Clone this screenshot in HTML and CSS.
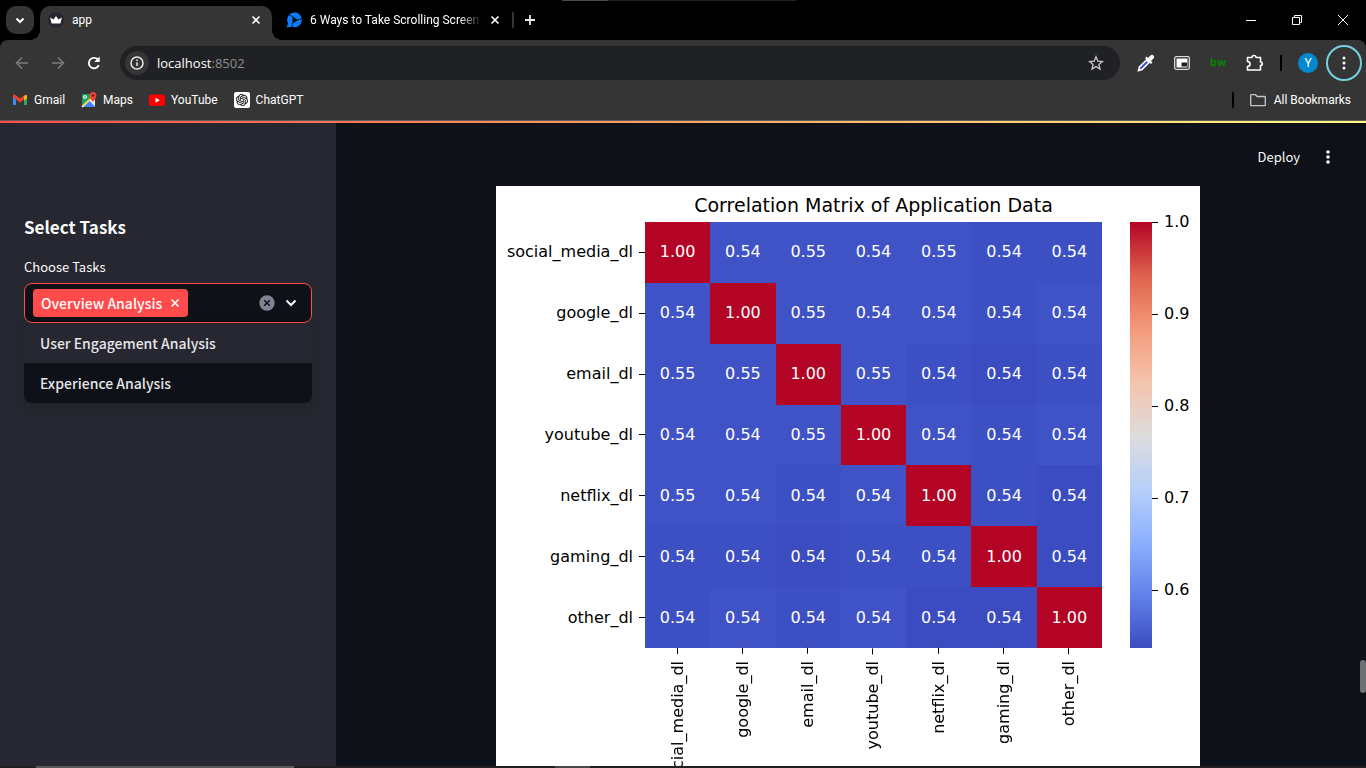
FILE: index.html
```html
<!DOCTYPE html>
<html lang="en">
<head>
<meta charset="utf-8">
<title>app</title>
<link rel="stylesheet" href="styles.css">
</head>
<body>
<div class="browser">
  <div class="tabstrip">
    <button class="tab-search" aria-label="Search tabs"><svg width="12" height="12" viewBox="0 0 12 12"><path d="M2.500 4.500 6 8l3.500-3.500" fill="none" stroke="#fff" stroke-width="2"/></svg></button>
    <div class="tab tab-active">
      <svg width="16" height="16" viewBox="0 0 16 16"><circle cx="8" cy="8" r="8" fill="#262730"/><path d="M2 5.500 5.500 7.500 8 4l2.500 3.500L14 5.500 12.300 11.500H3.700z" fill="#fff"/></svg>
      <span class="tab-title">app</span>
      <button class="tab-close" aria-label="Close tab"><svg width="10" height="10" viewBox="0 0 10 10"><path d="M1.500 1.500l7 7M8.500 1.500l-7 7" stroke="#fff" stroke-width="1.600"/></svg></button>
    </div>
    <div class="tab tab-second">
      <svg width="16" height="16" viewBox="0 0 16 16"><path d="M8.500.500a7.300 7.300 0 1 1-2 14.300L.500 15.500 2 11.500A7.500 7.500 0 0 1 8.500.500z" fill="#0a7cff"/><path d="M6.500 4.500 12.500 8 6.500 11.500z" fill="#06101c"/><path d="M3.500 3 8 5.500M12 8l4-1.500M6.800 11l-1 4" stroke="#06101c" stroke-width=".900"/></svg>
      <span class="tab-title tab-title-fade">6 Ways to Take Scrolling Screen</span>
      <button class="tab-close" aria-label="Close tab"><svg width="10" height="10" viewBox="0 0 10 10"><path d="M1.500 1.500l7 7M8.500 1.500l-7 7" stroke="#fff" stroke-width="1.600"/></svg></button>
    </div>
    <span class="tab-divider"></span>
    <button class="tab-new" aria-label="New tab"><svg width="12" height="12" viewBox="0 0 12 12"><path d="M6 1v10M1 6h10" stroke="#e8e8e8" stroke-width="1.800"/></svg></button>
    <div class="window-buttons">
      <button aria-label="Minimize"><svg width="10" height="10" viewBox="0 0 10 10"><path d="M0 5.500h10" stroke="#fff"/></svg></button>
      <button aria-label="Restore"><svg width="10" height="10" viewBox="0 0 10 10"><path d="M.500 2.500h7v7h-7zM2.500 2.500v-2h7v7h-2" fill="none" stroke="#fff"/></svg></button>
      <button aria-label="Close"><svg width="10" height="10" viewBox="0 0 10 10"><path d="M0 0l10 10M10 0 0 10" stroke="#fff"/></svg></button>
    </div>
  </div>

  <div class="chrome">
    <div class="toolbar">
      <button class="tool" aria-label="Back"><svg width="16" height="16" viewBox="0 0 16 16"><path d="M14 8H3M8 2.500 2.500 8 8 13.500" fill="none" stroke="#7c7c7c" stroke-width="1.600"/></svg></button>
      <button class="tool" aria-label="Forward"><svg width="16" height="16" viewBox="0 0 16 16"><path d="M2 8h11M8 2.500 13.500 8 8 13.500" fill="none" stroke="#7c7c7c" stroke-width="1.600"/></svg></button>
      <button class="tool" aria-label="Reload"><svg width="16" height="16" viewBox="0 0 16 16"><path d="M12.800 10.200A5.200 5.200 0 1 1 12 4.700" fill="none" stroke="#fff" stroke-width="1.900"/><path d="M13.700 1.500V7H8.200z" fill="#fff"/></svg></button>
      <div class="omnibox">
        <button class="site-info" aria-label="Site information"><svg width="14" height="14" viewBox="0 0 14 14"><circle cx="7" cy="7" r="6" fill="none" stroke="#e8e8e8" stroke-width="1.500"/><path d="M7 6.200V10M7 3.500v1.600" stroke="#e8e8e8" stroke-width="1.500"/></svg></button>
        <div class="url">localhost<span class="port">:8502</span></div>
        <button class="star" aria-label="Bookmark this tab"><svg width="16" height="16" viewBox="0 0 16 16"><path d="M8 1.800l1.800 4.300 4.600.400-3.500 3 1.100 4.600L8 11.600l-4 2.500 1.100-4.600-3.500-3 4.600-.400z" fill="none" stroke="#c7c7c7" stroke-width="1.300"/></svg></button>
      </div>
      <div class="extensions">
        <button class="tool" aria-label="Color picker"><svg width="18" height="18" viewBox="0 0 18 18"><path d="M9.500 6 2.500 13 1.500 16.500 5 15.500 12 8.500z" fill="#3554d8" stroke="#fff" stroke-width="1.600"/><path d="M8 4l6 6 1.500-1.500-1.500-1.500 2.500-2.500a2 2 0 0 0-3-3L11 4 9.500 2.500z" fill="#fff"/></svg></button>
        <button class="tool" aria-label="Picture in picture"><svg width="16" height="14" viewBox="0 0 16 14"><rect x=".700" y=".700" width="14.600" height="12.600" rx="1.500" fill="#222" stroke="#ddd" stroke-width="1.300"/><path d="M2.500 2.500h11v9h-11z" fill="#fff"/><path d="M7.500 6.500h5.500v4H7.500z" fill="#222"/></svg></button>
        <button class="tool bw" aria-label="bw">bw</button>
        <button class="tool" aria-label="Extensions"><svg width="18" height="18" viewBox="0 0 18 18"><path d="M2.500 3.500H7a2 2 0 0 1 4 0h4.500V8a1.500 1.500 0 0 1 0 3.500V16h-13v-3.500a2.500 2.500 0 0 0 0-5z" fill="none" stroke="#fff" stroke-width="1.600" stroke-linejoin="round"/></svg></button>
        <span class="tool-divider"></span>
        <button class="tool" aria-label="Profile Y"><span class="avatar">Y</span></button>
        <button class="tool menu" aria-label="Browser menu"><svg width="4" height="16" viewBox="0 0 4 16"><g fill="#fff"><circle cx="2" cy="3" r="1.500"/><circle cx="2" cy="8" r="1.500"/><circle cx="2" cy="13" r="1.500"/></g></svg></button>
      </div>
    </div>

    <div class="bookmarks">
      <a href="#"><svg width="16" height="16" viewBox="0 0 16 16"><path d="M1 4v9h3V8z" fill="#4285f4"/><path d="M15 4v9h-3V8z" fill="#34a853"/><path d="M1 4.500V3.500C1 2.500 2.500 2 3.500 3L8 6.500 12.500 3C13.500 2 15 2.500 15 3.500V5L8 10.500 1 5z" fill="#ea4335"/><path d="M12 4l3-1v3.200l-3 2.300z" fill="#fbbc04"/></svg>Gmail</a>
      <a href="#"><svg width="16" height="16" viewBox="0 0 16 16"><path d="M1 2h13v13H1z" fill="#e8eaed"/><path d="M1 2h9v4L1 14z" fill="#1ea362"/><path d="M8 8.500 14.500 15H2z" fill="#4285f4"/><path d="M9 7.500 1 15" stroke="#fff" stroke-width="1.500"/><path d="M10.500 5.500 1 14" stroke="#fbbc04" stroke-width="1.200"/><circle cx="4" cy="5" r="1.400" fill="none" stroke="#fff"/><path d="M12 0a3.500 3.500 0 0 1 3.500 3.500C15.500 6 12 10 12 10S8.500 6 8.500 3.500A3.500 3.500 0 0 1 12 0z" fill="#ea4335"/><circle cx="12" cy="3.500" r="1.200" fill="#811411"/></svg>Maps</a>
      <a href="#"><svg width="16" height="16" viewBox="0 0 16 16"><rect y="2.500" width="16" height="11.500" rx="2.500" fill="#f00"/><path d="M6.500 5.700v5l4.300-2.500z" fill="#fff"/></svg>YouTube</a>
      <a href="#"><svg width="16" height="16" viewBox="0 0 16 16"><rect width="16" height="16" rx="2" fill="#fff"/><path transform="translate(2 2) scale(.5)" fill="#111" stroke="#111" stroke-width=".3" d="M22.2819 9.8211a5.9847 5.9847 0 0 0-.5157-4.9108 6.0462 6.0462 0 0 0-6.5098-2.9A6.0651 6.0651 0 0 0 4.9807 4.1818a5.9847 5.9847 0 0 0-3.9977 2.9 6.0462 6.0462 0 0 0 .7427 7.0966 5.98 5.98 0 0 0 .511 4.9107 6.051 6.051 0 0 0 6.5146 2.9001A5.9847 5.9847 0 0 0 13.2599 24a6.0557 6.0557 0 0 0 5.7718-4.2058 5.9894 5.9894 0 0 0 3.9977-2.9001 6.0557 6.0557 0 0 0-.7475-7.0729zm-9.022 12.6081a4.4755 4.4755 0 0 1-2.8764-1.0408l.1419-.0804 4.7783-2.7582a.7948.7948 0 0 0 .3927-.6813v-6.7369l2.02 1.1686a.071.071 0 0 1 .038.052v5.5826a4.504 4.504 0 0 1-4.4945 4.4944zm-9.6607-4.1254a4.4708 4.4708 0 0 1-.5346-3.0137l.142.0852 4.783 2.7582a.7712.7712 0 0 0 .7806 0l5.8428-3.3685v2.3324a.0804.0804 0 0 1-.0332.0615L9.74 19.9502a4.4992 4.4992 0 0 1-6.1408-1.6464zM2.3408 7.8956a4.485 4.485 0 0 1 2.3655-1.9728V11.6a.7664.7664 0 0 0 .3879.6765l5.8144 3.3543-2.0201 1.1685a.0757.0757 0 0 1-.071 0l-4.8303-2.7865A4.504 4.504 0 0 1 2.3408 7.872zm16.5963 3.8558L13.1038 8.364 15.1192 7.2a.0757.0757 0 0 1 .071 0l4.8303 2.7913a4.4944 4.4944 0 0 1-.6765 8.1042v-5.6772a.79.79 0 0 0-.407-.667zm2.0107-3.0231l-.142-.0852-4.7735-2.7818a.7759.7759 0 0 0-.7854 0L9.409 9.2297V6.8974a.0662.0662 0 0 1 .0284-.0615l4.8303-2.7866a4.4992 4.4992 0 0 1 6.6802 4.66zM8.3065 12.863l-2.02-1.1638a.0804.0804 0 0 1-.038-.0567V6.0742a4.4992 4.4992 0 0 1 7.3757-3.4537l-.142.0805L8.704 5.459a.7948.7948 0 0 0-.3927.6813zm1.0976-2.3654l2.602-1.4998 2.6069 1.4998v2.9994l-2.5974 1.4997-2.6067-1.4997Z"/></svg>ChatGPT</a>
      <span class="bookmark-divider"></span>
      <a class="all-bookmarks" href="#"><svg width="16" height="16" viewBox="0 0 16 16"><path d="M.700 13V3.500q0-.800.800-.800h4l1.700 1.800h7.300q.800 0 .800.800V13q0 .700-.800.700h-13q-.800 0-.800-.700z" fill="none" stroke="#c7c7c7" stroke-width="1.300"/></svg>All Bookmarks</a>
    </div>
  </div>

  <div class="app">
    <aside class="sidebar">
      <h2>Select Tasks</h2>
      <label for="tasks">Choose Tasks</label>
      <div class="multiselect">
        <div class="control">
          <span class="tag">Overview Analysis<button aria-label="Remove Overview Analysis"><svg width="10" height="10" viewBox="0 0 10 10"><path d="M1.500 1.500l7 7M8.500 1.500l-7 7" stroke="#fff" stroke-width="1.600"/></svg></button></span>
          <input id="tasks" type="text" role="combobox" aria-expanded="true" aria-controls="task-options">
          <button aria-label="Clear all"><svg width="16" height="16" viewBox="0 0 16 16"><circle cx="8" cy="8" r="7.700" fill="#808495"/><path d="M5.200 5.200l5.600 5.600M10.800 5.200l-5.600 5.600" stroke="#0e1117" stroke-width="1.600"/></svg></button>
          <button aria-label="Open"><svg width="12" height="12" viewBox="0 0 12 12"><path d="M1.500 3.500 6 8l4.500-4.500" fill="none" stroke="#fafafa" stroke-width="2"/></svg></button>
        </div>
        <ul class="options" id="task-options" role="listbox">
          <li class="highlighted" role="option">User Engagement Analysis</li>
          <li role="option">Experience Analysis</li>
        </ul>
      </div>
    </aside>
    <main class="main">
      <header class="app-header">
        <button class="deploy">Deploy</button>
        <button aria-label="Main menu"><svg width="4" height="16" viewBox="0 0 4 16"><g fill="#fafafa"><circle cx="2" cy="3" r="1.800"/><circle cx="2" cy="8" r="1.800"/><circle cx="2" cy="13" r="1.800"/></g></svg></button>
      </header>
      <figure class="chart">
        <figcaption>Correlation Matrix of Application Data</figcaption>
        <div class="plot">
          <table class="heatmap">
            <tbody>
              <tr><th scope="row">social_media_dl</th><td class="one">1.00</td><td>0.54</td><td>0.55</td><td>0.54</td><td>0.55</td><td class="mid">0.54</td><td class="mid">0.54</td></tr>
              <tr><th scope="row">google_dl</th><td>0.54</td><td class="one">1.00</td><td>0.55</td><td>0.54</td><td>0.54</td><td class="mid">0.54</td><td>0.54</td></tr>
              <tr><th scope="row">email_dl</th><td>0.55</td><td>0.55</td><td class="one">1.00</td><td>0.55</td><td class="mid">0.54</td><td class="low">0.54</td><td class="mid">0.54</td></tr>
              <tr><th scope="row">youtube_dl</th><td>0.54</td><td>0.54</td><td>0.55</td><td class="one">1.00</td><td>0.54</td><td class="mid">0.54</td><td>0.54</td></tr>
              <tr><th scope="row">netflix_dl</th><td>0.55</td><td>0.54</td><td class="mid">0.54</td><td>0.54</td><td class="one">1.00</td><td class="mid">0.54</td><td class="low">0.54</td></tr>
              <tr><th scope="row">gaming_dl</th><td class="mid">0.54</td><td class="mid">0.54</td><td class="low">0.54</td><td class="mid">0.54</td><td class="mid">0.54</td><td class="one">1.00</td><td class="low">0.54</td></tr>
              <tr><th scope="row">other_dl</th><td class="mid">0.54</td><td>0.54</td><td class="mid">0.54</td><td>0.54</td><td class="low">0.54</td><td class="low">0.54</td><td class="one">1.00</td></tr>
            </tbody>
          </table>
          <div class="colorbar"></div>
          <div class="scale"><span>1.0</span><span>0.9</span><span>0.8</span><span>0.7</span><span>0.6</span></div>
        </div>
        <div class="columns">
          <span>social_media_dl</span><span>google_dl</span><span>email_dl</span><span>youtube_dl</span><span>netflix_dl</span><span>gaming_dl</span><span>other_dl</span>
        </div>
      </figure>
      <div class="scroll-thumb"></div>
    </main>
  </div>
  <div class="taskbar-edge"></div>
</div>
</body>
</html>
```
FILE: styles.css
```css
* { box-sizing: border-box; }

body {
  margin: 0;
  background: #000;
  color: #fff;
  font: 12px/16px Roboto, "Open Sans", sans-serif;
}

button {
  display: flex;
  align-items: center;
  justify-content: center;
  flex: none;
  padding: 0;
  border: 0;
  background: none;
  color: inherit;
  font: inherit;
}

svg { display: block; flex: none; }

.browser {
  display: flex;
  flex-direction: column;
  height: 100vh;
  overflow: hidden;
}

/* Tab strip */
.tabstrip {
  display: flex;
  flex: none;
  height: 40px;
  padding-left: 6px;
  background: linear-gradient(90deg, #000 562px, #4a4a4a 562px, #4a4a4a 608px, #222 608px, #222 796px, #000 796px) top / 100% 1px no-repeat;
}

.tab-search {
  width: 28px;
  height: 28px;
  margin: 6px 6px 0 0;
  border-radius: 10px;
  background: #353535;
}

.tab {
  position: relative;
  display: flex;
  align-items: center;
  gap: 8px;
  height: 34px;
  margin-top: 6px;
  padding: 0 8px 6px;
}

.tab-active {
  width: 232px;
  border-radius: 10px 10px 0 0;
  background: #353535;
}

.tab-active::before,
.tab-active::after {
  content: "";
  position: absolute;
  bottom: 0;
  width: 10px;
  height: 10px;
}

.tab-active::before { right: 100%; background: radial-gradient(circle at 0 0, transparent 10px, #353535 10px); }
.tab-active::after { left: 100%; background: radial-gradient(circle at 100% 0, transparent 10px, #353535 10px); }

.tab-second { width: 240px; padding: 0 10px 6px 14px; }

.tab-title {
  flex: 1;
  white-space: nowrap;
}

.tab-title-fade { mask-image: linear-gradient(90deg, #000 88%, transparent 102%); }

.tab-close { width: 16px; height: 16px; }

.tab-divider {
  width: 2px;
  height: 16px;
  margin-top: 12px;
  background: #353535;
}

.tab-new { width: 32px; }

.window-buttons { display: flex; margin-left: auto; }
.window-buttons button { width: 46px; }

/* Toolbar */
.chrome {
  flex: none;
  border-bottom: 1px solid #5c5c5c;
  border-radius: 8px 8px 0 0;
  background: #353535;
}

.toolbar {
  display: flex;
  align-items: center;
  height: 46px;
  padding: 0 4px;
}

.tool { width: 36px; height: 36px; }

.omnibox {
  display: flex;
  align-items: center;
  flex: 1;
  height: 34px;
  margin: 0 8px;
  padding: 0 12px 0 5px;
  border-radius: 17px;
  background: #202124;
}

.site-info {
  width: 24px;
  height: 24px;
  margin-right: 8px;
  border-radius: 12px;
  background: #353535;
}

.url { flex: 1; font: 13px/16px "Open Sans", sans-serif; }
.port { color: #8e8e8e; }
.star { width: 24px; height: 24px; }

.extensions { display: flex; align-items: center; }

.bw { color: #078207; font: bold 10px/16px "DejaVu Sans", sans-serif; }

.tool-divider {
  width: 2px;
  height: 16px;
  margin: 0 8px;
  background: #000;
}

.avatar {
  width: 20px;
  height: 20px;
  border-radius: 10px;
  background: #0288d1;
  line-height: 20px;
}

.menu { border: 2px solid #75d2e0; border-radius: 18px; }

.bookmarks {
  display: flex;
  align-items: center;
  gap: 16px;
  height: 34px;
  padding: 0 15px 6px 12px;
}

.bookmarks a {
  display: flex;
  gap: 6px;
  color: inherit;
  text-decoration: none;
}

.bookmarks .all-bookmarks { gap: 8px; }

.bookmark-divider {
  width: 2px;
  height: 16px;
  margin-left: auto;
  background: #000;
}

/* Application */
.app {
  display: flex;
  flex: 1;
  min-height: 0;
  padding-top: 2px;
  background: linear-gradient(90deg, #ff4b4b, #fffd80) top / 100% 2px no-repeat #0e1117;
  color: #fafafa;
  font: 500 14px/24px "Noto Sans CJK SC", sans-serif;
}

.sidebar {
  flex: none;
  width: 336px;
  padding: 92px 24px 0;
  background: #262730;
}

.sidebar h2 {
  margin: 0 0 16px;
  font-size: 17px;
  line-height: 24px;
}

.sidebar label {
  display: block;
  margin-bottom: 4px;
  font-size: 13px;
  font-weight: 400;
}

.multiselect { position: relative; }

.control {
  display: flex;
  align-items: center;
  gap: 8px;
  height: 40px;
  padding: 0 12px 0 8px;
  border: 1px solid #ff4b4b;
  border-radius: 8px;
  background: #0e1117;
}

.tag {
  display: flex;
  align-items: center;
  gap: 8px;
  height: 28px;
  padding: 0 8px;
  border-radius: 4px;
  background: #ff4b4b;
  white-space: nowrap;
}

.control input {
  flex: 1;
  min-width: 0;
  border: 0;
  outline: 0;
  background: none;
  color: inherit;
  font: inherit;
}

.control > button { width: 16px; height: 16px; }

.options {
  position: absolute;
  top: 100%;
  left: 0;
  right: 0;
  margin: 0;
  padding: 0;
  overflow: hidden;
  border-radius: 8px;
  background: #0e1117;
  box-shadow: 0 4px 16px rgba(0, 0, 0, 0.16);
  color: #e6e6e8;
  list-style: none;
}

.options li { padding: 8px 16px; }
.options .highlighted { background: #262730; }

.main {
  position: relative;
  flex: 1;
  min-width: 0;
  padding-right: 6px;
  overflow: hidden;
}

.app-header {
  display: flex;
  align-items: center;
  justify-content: flex-end;
  gap: 20px;
  height: 63px;
  padding: 4px 24px 0;
  font-size: 13px;
}

.app-header button { min-width: 16px; }
.deploy { font-weight: 400; }

/* Chart */
.chart {
  max-width: 704px;
  height: 640px;
  margin: 0 auto;
  padding: 7px 0 0;
  background: #fff;
  color: #000;
  font: 16px/24px "DejaVu Sans", sans-serif;
}

.chart figcaption {
  margin: 0 98px 5px 149px;
  font-size: 19px;
  text-align: center;
  white-space: nowrap;
}

.plot {
  display: flex;
  height: 426px;
}

.heatmap {
  flex: 1;
  height: 426px;
  border-spacing: 0;
  table-layout: fixed;
  width: 100%;
}

.heatmap th {
  width: 149px;
  padding: 0 12px 0 0;
  background: linear-gradient(#000, #000) right / 6px 1px no-repeat;
  font-weight: normal;
  text-align: right;
}

.heatmap td {
  padding: 0;
  background: #3f53c6;
  color: #fff;
  text-align: center;
}

.heatmap .mid { background: #3d50c3; }
.heatmap .low { background: #3b4cc0; }
.heatmap .one { background: #b40426; }

.colorbar {
  width: 22px;
  margin-left: 28px;
  background: linear-gradient(#b40426, #de614d 12.500%, #f49a7b 25%, #f4c4ac 37.500%, #dddcdc 50%, #b8d0f9 62.500%, #8db0fe 75%, #6282ea 87.500%, #3b4cc0);
}

.scale {
  display: flex;
  flex-direction: column;
  gap: 68px;
  width: 48px;
  margin-top: -12px;
}

.scale span {
  padding-left: 12px;
  background: linear-gradient(#000, #000) left / 6px 1px no-repeat;
}

.columns {
  display: grid;
  grid-template-columns: repeat(7, 1fr);
  margin: 0 98px 0 149px;
}

.columns span {
  justify-self: center;
  align-self: start;
  padding-bottom: 13px;
  background: linear-gradient(#000, #000) bottom / 1px 6px no-repeat;
  writing-mode: vertical-rl;
  transform: rotate(180deg);
}

.scroll-thumb {
  position: absolute;
  right: 0;
  top: 537px;
  width: 6px;
  height: 33px;
  border-radius: 3px;
  background: #6f7074;
}

.taskbar-edge {
  flex: none;
  height: 2px;
  background: linear-gradient(90deg, #231f20 36px, #5c5858 36px, #5c5858 294px, #231f20 294px, #231f20 555px, #4a4848 555px, #4a4848 590px, #231f20 590px);
}
```
